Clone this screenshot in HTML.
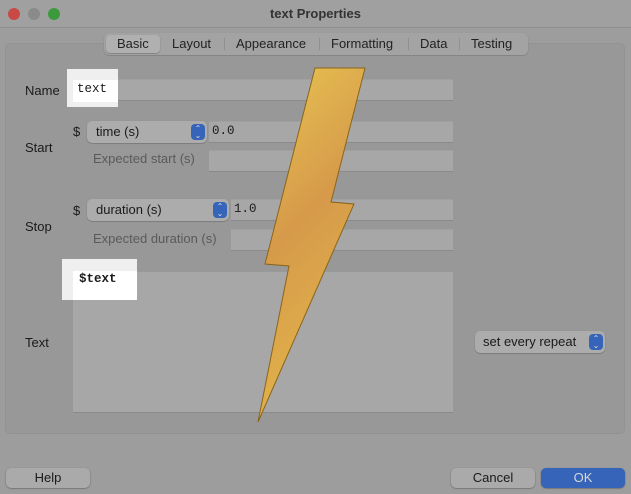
<!DOCTYPE html>
<html><head><style>
*{box-sizing:border-box;margin:0;padding:0}
body{width:631px;height:494px;background:#9d9d9d;font-family:"Liberation Sans",sans-serif;font-size:13px;color:#1a1a1a;position:relative;overflow:hidden}
.a{position:absolute}
.lbl{position:absolute;font-size:13px}
.fld{position:absolute;background:#a7a7a7;border-bottom:1px solid #8a8a8a;border-top:1px solid #a0a0a0}
.mono{font-family:"Liberation Mono",monospace;font-size:12.5px}
.pop{position:absolute;background:#acacac;border-radius:5px;box-shadow:0 0.5px 1px rgba(0,0,0,.35);padding-left:9px;line-height:22px}
.ar{position:absolute;right:2px;top:3px;width:14px;height:16px;background:#3564b8;border-radius:4px;color:#ddd;font-size:8px;line-height:7px;text-align:center;padding-top:1px}
.btn{position:absolute;background:#aaa;border-radius:5px;box-shadow:0 0.5px 1.5px rgba(0,0,0,.4);text-align:center;line-height:20px;font-size:13px}
</style></head><body>
<div class="a" style="left:0;top:0;width:631px;height:28px;background:#a0a0a0;border-bottom:1px solid #8f8f8f"></div>
<div class="a" style="left:8px;top:8px;width:12px;height:12px;border-radius:6px;background:#c94a44"></div>
<div class="a" style="left:28px;top:8px;width:12px;height:12px;border-radius:6px;background:#8a8a8a"></div>
<div class="a" style="left:48px;top:8px;width:12px;height:12px;border-radius:6px;background:#3c9a3c"></div>
<div class="a" style="left:0;top:6px;width:631px;text-align:center;font-weight:bold;color:#333">text Properties</div>
<div class="a" style="left:5px;top:43px;width:620px;height:391px;background:#989898;border:1px solid #929292;border-radius:5px"></div>
<div class="a" style="left:104px;top:33px;width:424px;height:22px;background:#a3a3a3;border-radius:5px;box-shadow:0 0.5px 1px rgba(0,0,0,.25)"></div>
<div class="a" style="left:106px;top:35px;width:54px;height:18px;background:#b0b0b0;border-radius:4px;box-shadow:0 0.5px 1px rgba(0,0,0,.35)"></div>
<div class="a" style="top:36px;left:0;width:631px;height:16px;font-size:13px;color:#222">
<span class="a" style="left:117px">Basic</span><span class="a" style="left:172px">Layout</span><span class="a" style="left:236px">Appearance</span><span class="a" style="left:331px">Formatting</span><span class="a" style="left:420px">Data</span><span class="a" style="left:471px">Testing</span>
<span class="a" style="left:224px;top:2px;width:1px;height:12px;background:#909090"></span><span class="a" style="left:319px;top:2px;width:1px;height:12px;background:#909090"></span><span class="a" style="left:408px;top:2px;width:1px;height:12px;background:#909090"></span><span class="a" style="left:459px;top:2px;width:1px;height:12px;background:#909090"></span></div>

<div class="lbl" style="left:25px;top:83px">Name</div>
<div class="fld" style="left:70px;top:79px;width:383px;height:22px"></div>
<div class="a" style="left:67px;top:69px;width:51px;height:38px;background:#efefef"></div>
<div class="a" style="left:73px;top:80px;width:45px;height:22px;background:#fff"></div>
<div class="a mono" style="left:77px;top:82px">text</div>

<div class="lbl" style="left:25px;top:140px">Start</div>
<div class="lbl" style="left:73px;top:124px">$</div>
<div class="pop" style="left:87px;top:121px;width:120px;height:22px">time (s)<div class="ar">⌃<br>⌄</div></div>
<div class="fld" style="left:209px;top:121px;width:244px;height:22px"></div>
<div class="a mono" style="left:212px;top:124px">0.0</div>
<div class="lbl" style="left:93px;top:151px;color:#5a5a5a">Expected start (s)</div>
<div class="fld" style="left:209px;top:150px;width:244px;height:22px"></div>

<div class="lbl" style="left:25px;top:219px">Stop</div>
<div class="lbl" style="left:73px;top:203px">$</div>
<div class="pop" style="left:87px;top:199px;width:142px;height:22px">duration (s)<div class="ar">⌃<br>⌄</div></div>
<div class="fld" style="left:231px;top:199px;width:222px;height:22px"></div>
<div class="a mono" style="left:234px;top:202px">1.0</div>
<div class="lbl" style="left:93px;top:231px;color:#5a5a5a">Expected duration (s)</div>
<div class="fld" style="left:231px;top:229px;width:222px;height:22px"></div>

<div class="lbl" style="left:25px;top:335px">Text</div>
<div class="fld" style="left:73px;top:271px;width:380px;height:142px;border-top:1px solid #999"></div>
<div class="a" style="left:62px;top:259px;width:75px;height:41px;background:#efefef"></div>
<div class="a" style="left:73px;top:271px;width:64px;height:29px;background:#fff"></div>
<div class="a mono" style="left:79px;top:272px;font-weight:bold">$text</div>

<div class="pop" style="left:475px;top:331px;width:130px;height:22px;padding-left:8px">set every repeat<div class="ar">⌃<br>⌄</div></div>

<svg class="a" style="left:0;top:0" width="631" height="494">
<defs><linearGradient id="g" x1="0" y1="0" x2="0.3" y2="1"><stop offset="0" stop-color="#e8c652"/><stop offset="0.5" stop-color="#d69a4a"/><stop offset="1" stop-color="#e2b44a"/></linearGradient></defs>
<polygon points="315,68 365,68 331,202 354,204 258,422 289,266 265,264" fill="url(#g)" stroke="#8a6418" stroke-width="1"/>
</svg>

<div class="btn" style="left:6px;top:468px;width:84px">Help</div>
<div class="btn" style="left:451px;top:468px;width:84px">Cancel</div>
<div class="btn" style="left:541px;top:468px;width:84px;background:#3564b8;color:#d8d8d8">OK</div>
</body></html>
